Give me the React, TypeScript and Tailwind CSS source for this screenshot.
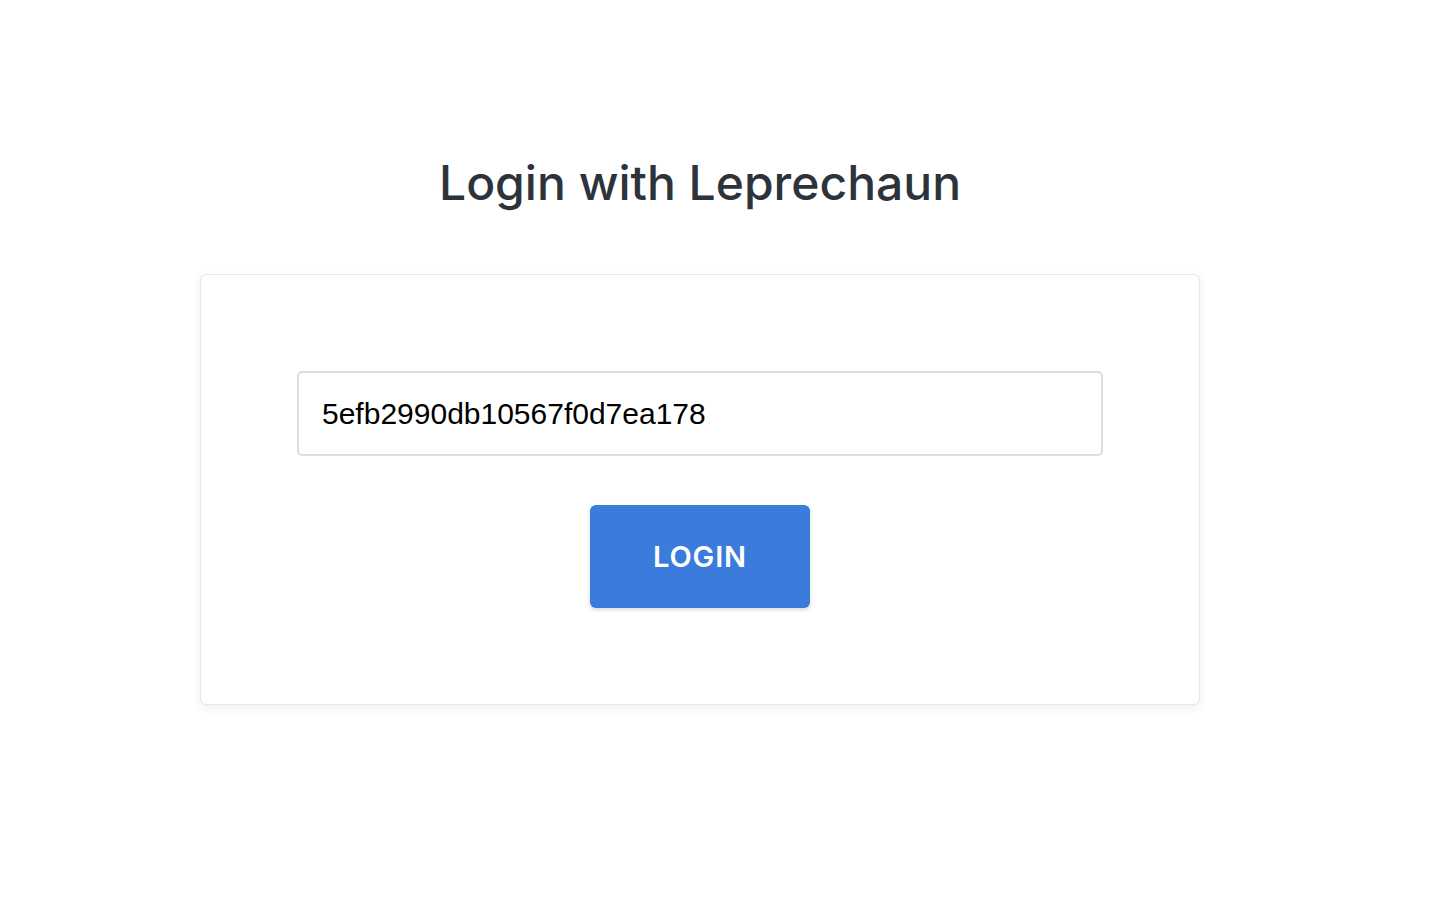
import { useState } from 'react';

export default function App() {
  const [token, setToken] = useState('5efb2990db10567f0d7ea178');

  return (
    <div className="min-h-screen bg-white font-['Inter',sans-serif]">
      <div className="ml-[200px] flex w-[1000px] flex-col pt-[155px]">
        {/* Title */}
        <h1 className="text-center text-[48px] leading-[56px] font-medium text-[#2d333a]">
          Login with Leprechaun
        </h1>

        {/* Card */}
        <div className="mt-[63px] flex flex-col items-center rounded-md border border-[#e6e6e6] bg-white px-[96px] py-[96px] shadow-[0_3px_10px_rgba(0,0,0,0.07)]">
          <input
            type="text"
            value={token}
            onChange={(e) => setToken(e.target.value)}
            className="h-[85px] w-full rounded-[5px] border-2 border-[#dedede] px-[23px] font-['Liberation_Sans',Arial,sans-serif] text-[30px] text-black outline-none"
          />
          <button className="mt-[49px] h-[103px] w-[220px] rounded-[6px] bg-[#3b7bdb] text-[29px] font-semibold tracking-[0.03em] text-white shadow-[0_2px_4px_rgba(0,0,0,0.15)]">
            LOGIN
          </button>
        </div>
      </div>
    </div>
  );
}
